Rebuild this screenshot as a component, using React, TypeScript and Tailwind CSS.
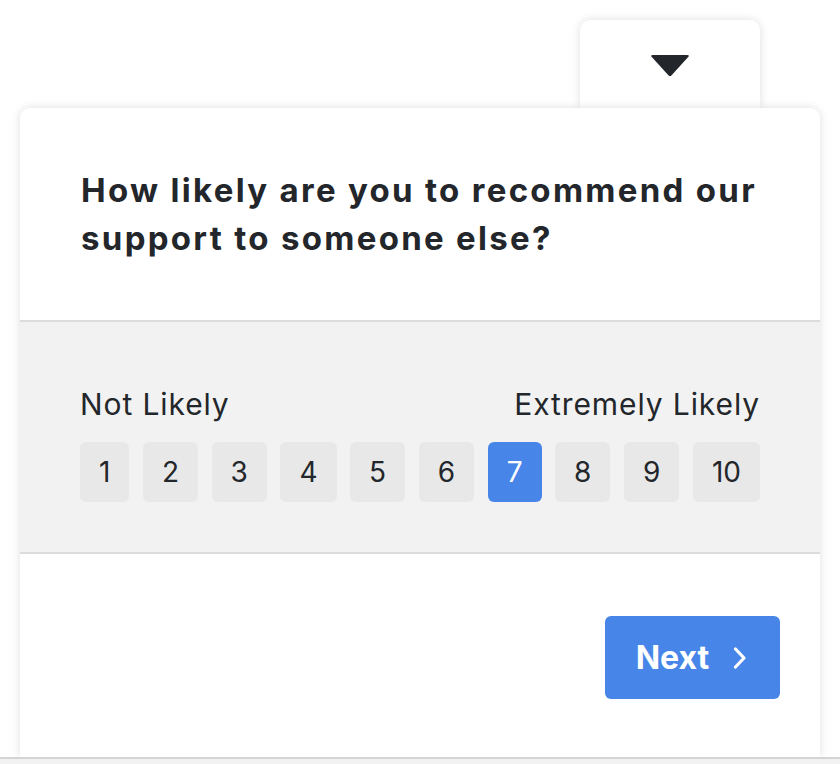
import React from "react";

export default function App() {
  const nums = [1, 2, 3, 4, 5, 6, 7, 8, 9, 10];
  const selected = 7;
  return (
    <div
      className="w-[840px] h-[764px] overflow-hidden bg-white flex flex-col text-[#23262a]"
      style={{ fontFamily: "Inter, 'Noto Sans', sans-serif" }}
    >
      <div className="pt-[20px] flex-1 flex flex-col">
        <div className="ml-[580px] w-[180px] h-[88px] bg-white rounded-t-[10px] shadow-[0_0_10px_rgba(0,0,0,0.13)] flex justify-center pt-[35px]">
          <svg width="40" height="22" viewBox="0 0 40 22">
            <path
              d="M3 0 H37 Q40 0 38.2 2 L21.6 20.2 Q20 22 18.4 20.2 L1.8 2 Q0 0 3 0 Z"
              fill="#23262a"
            />
          </svg>
        </div>
        <div className="relative z-10 mx-[20px] flex-1 bg-white rounded-t-[10px] shadow-[0_0_10px_rgba(0,0,0,0.13)] flex flex-col">
          <div className="px-[61px] pt-[58px] pb-[58px] border-b-2 border-[#dcdcdc]">
            <h1 className="text-[33px] leading-[48px] font-bold tracking-[2.3px] whitespace-nowrap">
              How likely are you to recommend our
              <br />
              support to someone else?
            </h1>
          </div>
          <div className="bg-[#f2f2f2] px-[60px] pt-[60px] pb-[50px] border-b-2 border-[#dcdcdc]">
            <div className="flex justify-between text-[30px] leading-[44px] tracking-[0.9px]">
              <span>Not Likely</span>
              <span>Extremely Likely</span>
            </div>
            <div className="mt-[16px] flex justify-between">
              {nums.map((n) => (
                <div
                  key={n}
                  className={
                    n === selected
                      ? "h-[60px] px-[19px] rounded-[6px] bg-[#4885e8] text-white flex items-center justify-center text-[28px]"
                      : "h-[60px] px-[19px] rounded-[6px] bg-[#e8e8e8] flex items-center justify-center text-[28px]"
                  }
                >
                  {n}
                </div>
              ))}
            </div>
          </div>
          <div className="flex justify-end pr-[40px] pt-[62px]">
            <button className="h-[83px] w-[175px] rounded-[6px] bg-[#4885e8] text-white flex items-center justify-center gap-[24px] text-[32px] font-bold pr-[2px]">
              <span>Next</span>
              <svg width="14" height="22" viewBox="0 0 14 22">
                <path
                  d="M2.5 2 L11 11 L2.5 20"
                  fill="none"
                  stroke="white"
                  strokeWidth="3.2"
                  strokeLinecap="round"
                  strokeLinejoin="round"
                />
              </svg>
            </button>
          </div>
        </div>
      </div>
      <div className="relative z-20 h-[7px] border-t-2 border-[#d4d4d4] bg-[#f2f2f2]" />
    </div>
  );
}
